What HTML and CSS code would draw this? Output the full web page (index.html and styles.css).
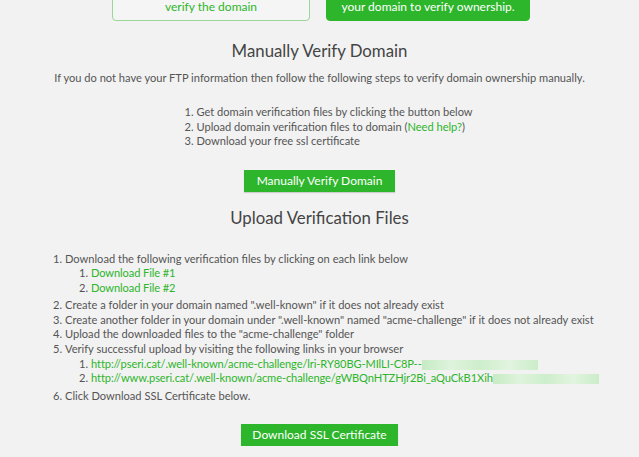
FILE: index.html
```html
<!DOCTYPE html>
<html lang="en">
<head>
    <meta charset="UTF-8">
    <title>Manually Verify Domain</title>
    <link rel="stylesheet" href="styles.css">
</head>
<body>

    <div class="options">
        <div class="option">Provide FTP information to automatically<br>verify the domain</div>
        <div class="option selected">Upload verification files manually to<br>your domain to verify ownership.</div>
    </div>

    <h2>Manually Verify Domain</h2>
    <p class="intro">If you do not have your FTP information then follow the following steps to verify domain ownership manually.</p>

    <div class="steps-wrap">
        <ol class="steps">
            <li>Get domain verification files by clicking the button below</li>
            <li>Upload domain verification files to domain (<a href="#">Need help?</a>)</li>
            <li>Download your free ssl certificate</li>
        </ol>
    </div>

    <div class="center">
        <a class="btn" href="#">Manually Verify Domain</a>
    </div>

    <h2 class="second">Upload Verification Files</h2>

    <ol class="upload">
        <li>Download the following verification files by clicking on each link below
            <ol>
                <li><a href="#">Download File #1</a></li>
                <li><a href="#">Download File #2</a></li>
            </ol>
        </li>
        <li>Create a folder in your domain named ".well-known" if it does not already exist</li>
        <li>Create another folder in your domain under ".well-known" named "acme-challenge" if it does not already exist</li>
        <li>Upload the downloaded files to the "acme-challenge" folder</li>
        <li>Verify successful upload by visiting the following links in your browser
            <ol>
                <li><a href="#">http://pseri.cat/.well-known/acme-challenge/lri-RY80BG-MIlLI-C8P--</a><span class="blur b1"></span></li>
                <li><a href="#">http://www.pseri.cat/.well-known/acme-challenge/gWBQnHTZHjr2Bi_aQuCkB1Xih</a><span class="blur b2"></span></li>
            </ol>
        </li>
        <li>Click Download SSL Certificate below.</li>
    </ol>

    <div class="center">
        <a class="btn btn-ssl" href="#">Download SSL Certificate</a>
    </div>

</body>
</html>
```

FILE: styles.css
```css
body {
    margin: 0;
    background-color: #f2f2f2;
    font-family: Lato, "Open Sans", Arial, sans-serif;
    color: #555;
    font-size: 11.1px;
    overflow: hidden;
}

a {
    color: #2db52b;
    text-decoration: none;
}

.options {
    display: flex;
    justify-content: center;
    gap: 16px;
    margin-top: -23px;
    margin-left: 3px;
}

.option {
    width: 198px;
    box-sizing: border-box;
    padding: 5px 4px 5px;
    border: 1px solid #9ad696;
    border-radius: 4px;
    color: #2db52b;
    text-align: center;
    font-size: 12px;
    line-height: 16px;
    white-space: nowrap;
    overflow: hidden;
    background: #f5f5f5;
}

.option.selected {
    width: 204px;
    background: #2db52b;
    border-color: #2db52b;
    color: white;
}

h2 {
    font-weight: normal;
    font-size: 16.8px;
    color: #444;
    text-align: center;
    margin: 18px 0 0;
    line-height: 24px;
}

.intro {
    text-align: center;
    margin: 7px 0 0;
    line-height: 16px;
}

.steps-wrap {
    display: flex;
    justify-content: center;
    margin-top: 19px;
    margin-left: 16px;
}

.steps {
    margin: 0;
    padding-left: 14px;
    line-height: 14.5px;
}

.center {
    display: flex;
    justify-content: center;
}

.btn {
    display: block;
    height: 22px;
    background-color: #2db52b;
    color: white;
    font-size: 12px;
    line-height: 22px;
    width: 151px;
    text-align: center;
    margin-top: 21px;
    box-shadow: 0 1px 1px rgba(0, 0, 0, 0.15);
}

.btn-ssl {
    width: 157px;
    margin-top: 21px;
}

.second {
    margin-top: 14px;
}

.upload {
    margin: 22px 0 0;
    padding-left: 65px;
    line-height: 14.6px;
}

.upload ol {
    margin: 0 0 3px;
    padding-left: 26px;
}

.upload ol a {
    letter-spacing: -0.1px;
}

.blur {
    display: inline-block;
    height: 10px;
    vertical-align: middle;
    background: linear-gradient(90deg, #c6ebc4, #dff3dd, #cdeecb, #e2f4e0, #cbedc9);
}

.b1 {
    width: 116px;
}

.b2 {
    width: 106px;
}
```
